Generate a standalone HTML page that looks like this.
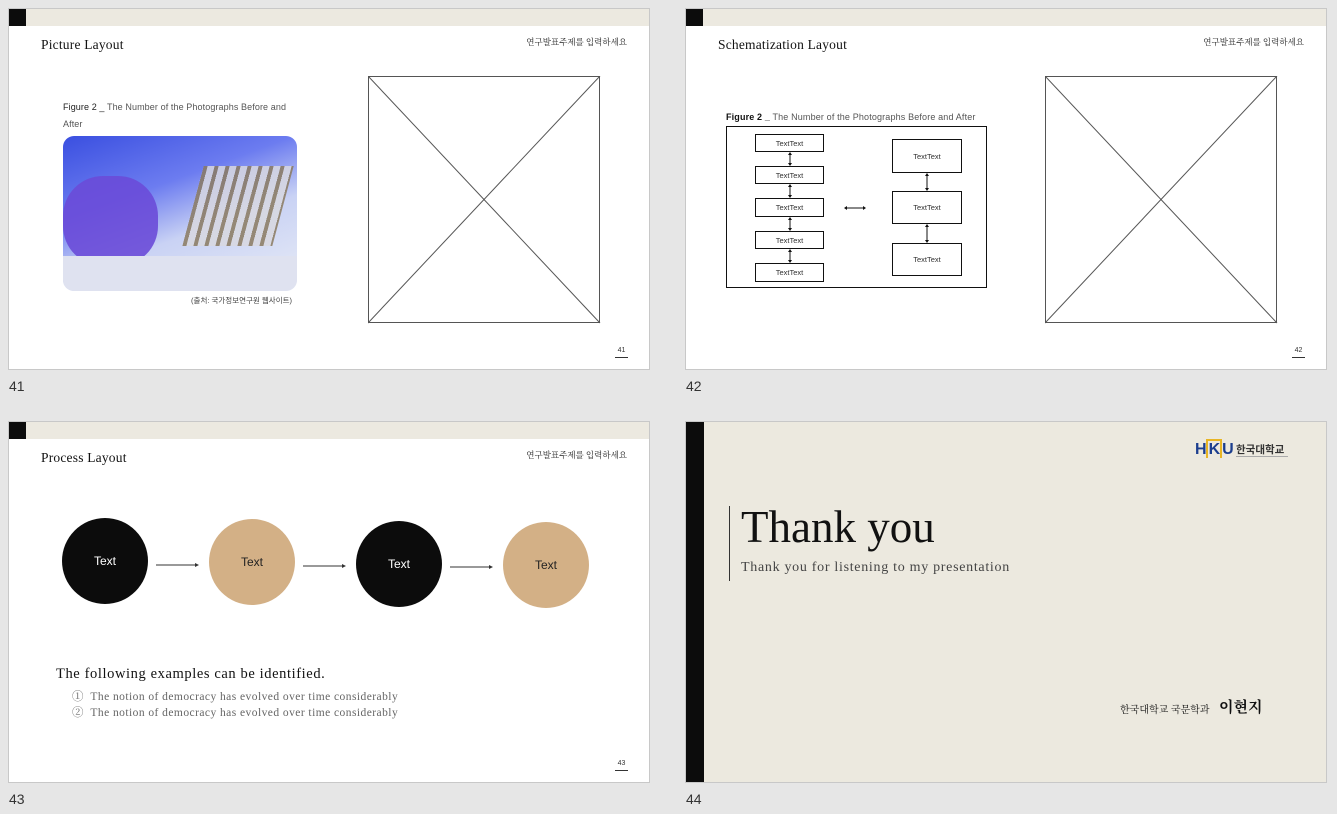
<!DOCTYPE html>
<html><head><meta charset="utf-8"><style>
*{margin:0;padding:0;box-sizing:border-box}
body{width:1337px;height:814px;background:#e6e6e6;position:relative;overflow:hidden;font-family:"Liberation Sans","Noto Sans CJK KR",sans-serif}
.s{position:absolute;width:642px;height:362px;background:#fff;border:1px solid #c8c8c8;overflow:hidden}
.a{position:absolute;white-space:nowrap}
.hb{position:absolute;left:0;top:0;width:100%;height:17px;background:#ece9e0}
.hb:before{content:"";position:absolute;left:0;top:0;width:17px;height:17px;background:#0c0c0c}
.t{font-family:"Liberation Serif","Noto Serif CJK SC",serif;font-size:13.5px;color:#111;letter-spacing:.2px}
.kr{font-family:"Noto Serif CJK SC","Noto Sans CJK KR",serif;font-size:8.5px;color:#222;right:22px;top:27px}
.pn{right:21px;top:338px;font-size:7px;color:#333;border-bottom:1px solid #333;width:13px;text-align:center;padding-bottom:3px}
.lbl{position:absolute;font-size:14px;color:#333}
.bx{position:absolute;border:1px solid #111;font-size:7.5px;color:#333;display:flex;align-items:center;justify-content:center}
.c{position:absolute;width:86px;height:86px;border-radius:50%;display:flex;align-items:center;justify-content:center;font-size:12px}
</style></head><body>

<!-- 41 -->
<div class="s" style="left:8px;top:8px">
<div class="hb"></div>
<div class="a t" style="left:32px;top:28px">Picture Layout</div>
<div class="a kr">연구발표주제를 입력하세요</div>
<div class="a" style="left:54px;top:90px;font-size:9px;color:#555;line-height:17px;white-space:normal;width:232px;letter-spacing:.1px"><b style="color:#222;font-weight:normal">Figure 2 _</b> The Number of the Photographs Before and After</div>
<div class="a" style="left:54px;top:127px;width:234px;height:155px;border-radius:11px;overflow:hidden;background:linear-gradient(160deg,#3a4fe0 0%,#6c7cf0 35%,#c9d2f4 60%,#e8ecf6 100%)">
<div style="position:absolute;left:0;top:40px;width:95px;height:90px;background:#6a4bd8;border-radius:40px;opacity:.9"></div>
<div style="position:absolute;left:130px;top:30px;width:90px;height:80px;background:repeating-linear-gradient(90deg,#8a7a60 0 4px,#d8d8e0 4px 11px);opacity:.85;transform:skewX(-15deg)"></div>
<div style="position:absolute;left:0;top:120px;width:234px;height:35px;background:#dfe2f0"></div>
</div>
<div class="a" style="right:357px;top:286px;font-size:7.5px;color:#444">(출처: 국가정보연구원 웹사이트)</div>
<svg class="a" style="left:359px;top:67px" width="233" height="248"><rect x=".5" y=".5" width="231" height="246" fill="none" stroke="#555"/><line x1="0" y1="0" x2="232" y2="247" stroke="#555"/><line x1="232" y1="0" x2="0" y2="247" stroke="#555"/></svg>
<div class="a pn">41</div>
</div>
<div class="lbl" style="left:9px;top:378px">41</div>

<!-- 42 -->
<div class="s" style="left:685px;top:8px">
<div class="hb"></div>
<div class="a t" style="left:32px;top:28px">Schematization Layout</div>
<div class="a kr">연구발표주제를 입력하세요</div>
<div class="a" style="left:40px;top:103px;font-size:9px;color:#555;letter-spacing:.15px"><b style="color:#111">Figure 2 _</b> The Number of the Photographs Before and After</div>
<div class="a" style="left:40px;top:117px;width:261px;height:162px;border:1px solid #111"></div>
<div class="bx" style="left:69px;top:125px;width:69px;height:18px">TextText</div>
<div class="bx" style="left:69px;top:157px;width:69px;height:18px">TextText</div>
<div class="bx" style="left:69px;top:189px;width:69px;height:19px">TextText</div>
<div class="bx" style="left:69px;top:222px;width:69px;height:18px">TextText</div>
<div class="bx" style="left:69px;top:254px;width:69px;height:19px">TextText</div>
<div class="bx" style="left:206px;top:130px;width:70px;height:34px">TextText</div>
<div class="bx" style="left:206px;top:182px;width:70px;height:33px">TextText</div>
<div class="bx" style="left:206px;top:234px;width:70px;height:33px">TextText</div>
<svg class="a" style="left:0;top:0" width="320" height="290" stroke="#111" fill="#111">
<g stroke-width="1"><line x1="104" y1="144" x2="104" y2="156"/><line x1="104" y1="176" x2="104" y2="188"/><line x1="104" y1="209" x2="104" y2="221"/><line x1="104" y1="241" x2="104" y2="253"/><line x1="241" y1="165" x2="241" y2="181"/><line x1="241" y1="216" x2="241" y2="233"/><line x1="159" y1="199" x2="179" y2="199"/></g>
<g stroke="none"><path d="M104 143l-2 3h4zM104 157l-2-3h4zM104 175l-2 3h4zM104 189l-2-3h4zM104 208l-2 3h4zM104 222l-2-3h4zM104 240l-2 3h4zM104 254l-2-3h4zM241 164l-2 3h4zM241 182l-2-3h4zM241 215l-2 3h4zM241 234l-2-3h4zM158 199l3-2v4zM180 199l-3-2v4z"/></g></svg>
<svg class="a" style="left:359px;top:67px" width="233" height="248"><rect x=".5" y=".5" width="231" height="246" fill="none" stroke="#555"/><line x1="0" y1="0" x2="232" y2="247" stroke="#555"/><line x1="232" y1="0" x2="0" y2="247" stroke="#555"/></svg>
<div class="a pn">42</div>
</div>
<div class="lbl" style="left:686px;top:378px">42</div>

<!-- 43 -->
<div class="s" style="left:8px;top:421px">
<div class="hb"></div>
<div class="a t" style="left:32px;top:28px">Process Layout</div>
<div class="a kr">연구발표주제를 입력하세요</div>
<div class="c" style="left:53px;top:96px;background:#0c0c0c;color:#fff">Text</div>
<div class="c" style="left:200px;top:97px;background:#d3b086;color:#222">Text</div>
<div class="c" style="left:347px;top:99px;background:#0c0c0c;color:#fff">Text</div>
<div class="c" style="left:494px;top:100px;background:#d3b086;color:#222">Text</div>
<svg class="a" style="left:0;top:0" width="642" height="200" stroke="#333" fill="#333">
<line x1="147" y1="143" x2="187" y2="143"/><path d="M190 143l-4-2v4z" stroke="none"/>
<line x1="294" y1="144" x2="334" y2="144"/><path d="M337 144l-4-2v4z" stroke="none"/>
<line x1="441" y1="145" x2="481" y2="145"/><path d="M484 145l-4-2v4z" stroke="none"/></svg>
<div class="a t" style="left:47px;top:244px;font-size:14.5px;letter-spacing:.6px">The following examples can be identified.</div>
<div class="a" style="left:63px;top:267px;font-family:'Liberation Serif','Noto Serif CJK SC',serif;font-size:11.5px;color:#666;line-height:16px;letter-spacing:.45px">①&nbsp; The notion of democracy has evolved over time considerably<br>②&nbsp; The notion of democracy has evolved over time considerably</div>
<div class="a pn">43</div>
</div>
<div class="lbl" style="left:9px;top:791px">43</div>

<!-- 44 -->
<div class="s" style="left:685px;top:421px;background:#ece9df">
<div class="a" style="left:0;top:0;width:18px;height:362px;background:#0c0c0c"></div>
<div class="a" style="left:43px;top:84px;width:1px;height:75px;background:#333"></div>
<div class="a" style="left:55px;top:79px;font-family:'Liberation Serif',serif;font-size:45px;color:#111;letter-spacing:0">Thank you</div>
<div class="a" style="left:55px;top:138px;font-family:'Liberation Serif',serif;font-size:14px;color:#444;letter-spacing:.7px">Thank you for listening to my presentation</div>
<div class="a" style="left:509px;top:17px;height:22px;width:95px">
<span style="position:absolute;left:0;top:2px;font-size:16px;font-weight:bold;color:#1c3e8e;letter-spacing:-1px">H<span style="border:2px solid #e8b524;border-bottom:none;padding:0 1px">K</span>U</span>
<span style="position:absolute;left:41px;top:3px;font-size:10.5px;font-weight:bold;color:#333">한국대학교</span>
<span style="position:absolute;left:41px;top:17px;width:52px;height:1px;background:#aaa"></span></div>
<div class="a" style="left:434px;top:279px;font-family:'Noto Serif CJK SC',serif;font-size:10px;color:#111">한국대학교 국문학과</div>
<div class="a" style="left:533px;top:274px;font-family:'Noto Serif CJK SC',serif;font-size:15px;font-weight:bold;color:#111">이현지</div>
</div>
<div class="lbl" style="left:686px;top:791px">44</div>
</body></html>
